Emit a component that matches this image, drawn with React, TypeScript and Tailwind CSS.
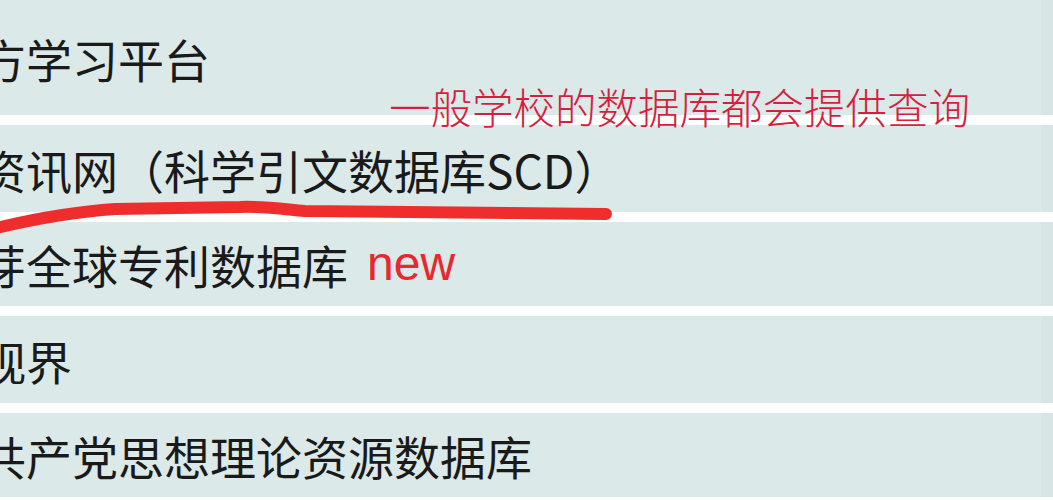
import React from 'react';

interface Entry {
  id: number;
  name: string;
  height: string;
  isNew?: boolean;
}

const entries: Entry[] = [
  { id: 1, name: '方学习平台', height: 'h-[115px]' },
  { id: 2, name: '资讯网（科学引文数据库SCD）', height: 'h-[87px]' },
  { id: 3, name: '芽全球专利数据库', height: 'h-[84px]', isNew: true },
  { id: 4, name: '视界', height: 'h-[87px]' },
  { id: 5, name: '共产党思想理论资源数据库', height: 'h-[84px]' },
];

const App: React.FC = () => {
  return (
    <div className="relative w-[1053px] h-[500px] overflow-hidden bg-white">
      <ul className="flex flex-col gap-[10px]">
        {entries.map((entry) => (
          <li key={entry.id} className={`${entry.height} flex items-center bg-[#dce9e9] overflow-hidden`}>
            <div className="flex-grow flex items-center -ml-[20px] whitespace-nowrap">
              <span className="font-['Noto_Sans_CJK_SC','Noto_Sans',sans-serif] text-[46px] leading-none text-[#1a1a1a]">
                {entry.name}
              </span>
              {entry.isNew && (
                <span className="ml-[19px] font-['Liberation_Sans',Arial,sans-serif] text-[48px] leading-none text-[#e8282e]">
                  new
                </span>
              )}
            </div>
            <div className="w-[12px] h-full bg-[#d8e5e5] flex-shrink-0" />
          </li>
        ))}
      </ul>

      {/* annotation overlay */}
      <p className="absolute left-[389px] top-[86px] font-['Noto_Sans_CJK_SC',sans-serif] font-light text-[41.5px] leading-none text-[#d61e3e] whitespace-nowrap">
        一般学校的数据库都会提供查询
      </p>
      <svg className="absolute inset-0 pointer-events-none" width="1053" height="500" viewBox="0 0 1053 500">
        <path
          d="M-4 228 C 30 220, 70 212, 115 209 L 240 207 C 262 206, 282 209, 305 211 L 606 214"
          fill="none"
          stroke="#ef2d2d"
          strokeWidth="12"
          strokeLinecap="round"
          strokeLinejoin="round"
        />
      </svg>
    </div>
  );
};

export default App;
